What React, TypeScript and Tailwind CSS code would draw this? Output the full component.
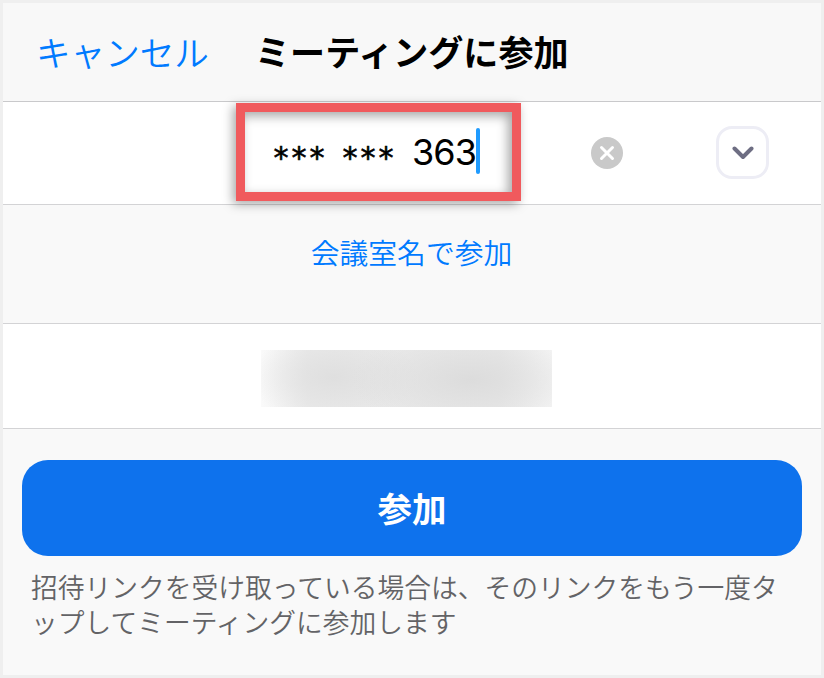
export default function App() {
  return (
    <div className="h-[678px] w-[824px] overflow-hidden border-[3px] border-[#efefef] bg-[#f9f9f9] font-['Inter','Noto_Sans_CJK_JP',sans-serif]">
      <Header />
      <MeetingIdRow />
      <RoomNameLink />
      <NameRow />
      <JoinSection />
    </div>
  );
}

function Header() {
  return (
    <header className="flex h-[99px] items-center border-b border-[#c9c9cb] bg-[#f8f8f8] pt-[3px] whitespace-nowrap">
      <button className="ml-[33px] w-[219px] text-left text-[34.6px] font-[350] text-[#007aff]">キャンセル</button>
      <h1 className="text-[35.1px] font-bold text-black">ミーティングに参加</h1>
    </header>
  );
}

function MeetingIdRow() {
  return (
    <div className="flex h-[103px] items-center border-b border-[#d3d3d5] bg-white">
      <div className="mb-[2px] ml-[233px] flex h-[98px] w-[285px] items-center border-[9px] border-[#f05a5d] pb-px pl-[27px] shadow-[-3px_3px_10px_rgba(0,0,0,0.35),inset_-4px_4px_11px_rgba(0,0,0,0.35)]">
        <span className="w-[69px] pt-[12px] font-['DejaVu_Sans_Mono',monospace] text-[30px] leading-none [-webkit-text-stroke:0.6px_black]">***</span>
        <span className="w-[71px] pt-[12px] font-['DejaVu_Sans_Mono',monospace] text-[30px] leading-none [-webkit-text-stroke:0.6px_black]">***</span>
        <span className="w-[63px] text-[36px] leading-none tracking-[-0.9px]">363</span>
        <span className="mb-px ml-px h-[46px] w-1 shrink-0 rounded-full bg-[#1f9bff]" />
      </div>
      <button className="mb-px ml-[70px] flex size-8 items-center justify-center rounded-full bg-[#c9c9c9]">
        <svg className="size-4" viewBox="0 0 16 16" stroke="white" strokeWidth="3" strokeLinecap="round">
          <path d="M2.5 2.5l11 11M13.5 2.5l-11 11" />
        </svg>
      </button>
      <button className="mb-[2px] ml-[93px] flex size-[53px] items-center justify-center rounded-[16px] border-[3px] border-[#ededf5]">
        <svg className="mt-px h-[14px] w-[22px]" viewBox="0 0 22 14" fill="none" stroke="#6e6e83" strokeWidth="4" strokeLinecap="round" strokeLinejoin="round">
          <path d="M2.5 2.5l8.5 8.5 8.5-8.5" />
        </svg>
      </button>
    </div>
  );
}

function RoomNameLink() {
  return (
    <div className="flex h-[119px] justify-center border-b border-[#d3d3d5] pt-[26px] pr-px">
      <button className="h-[46px] text-[28.8px] font-[350] text-[#007aff]">会議室名で参加</button>
    </div>
  );
}

function NameRow() {
  return (
    <div className="flex h-[105px] items-center border-b border-[#d3d3d5] bg-white pt-1">
      <div className="mt-px ml-[258px] flex h-[57px] w-[291px] overflow-hidden bg-[#f1f1f1]">
        <div className="h-full w-full bg-[radial-gradient(120px_50px_at_72%_52%,#dcdcdc_0%,#dcdcdc00_100%),radial-gradient(85px_45px_at_25%_48%,#dfdfdf_0%,#dfdfdf00_100%),linear-gradient(90deg,#fafafa_0%,#eaeaea_16%,#e9e9e9_82%,#f5f5f5_100%)]" />
      </div>
    </div>
  );
}

function JoinSection() {
  return (
    <section className="pt-[31px]">
      <button className="mx-[19px] flex h-[96px] w-[780px] items-center justify-center rounded-[26px] bg-[#0e72ed] pt-[3px] text-[34.5px] font-bold text-white">
        参加
      </button>
      <p className="mt-[15px] ml-[28px] text-[26.75px] leading-[34.5px] font-[350] whitespace-nowrap text-[#636366]">
        招待リンクを受け取っている場合は、そのリンクをもう一度タ
        <br />
        ップしてミーティングに参加します
      </p>
    </section>
  );
}
